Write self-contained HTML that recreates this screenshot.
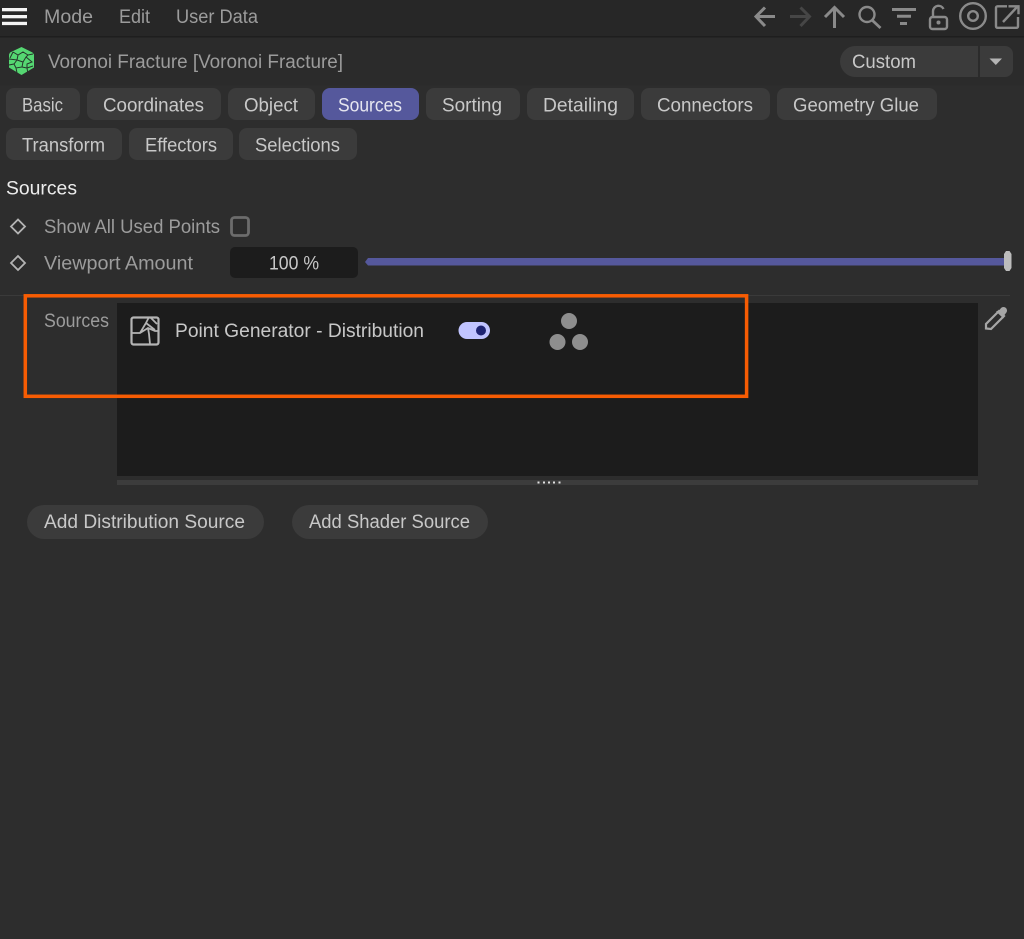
<!DOCTYPE html>
<html><head><meta charset="utf-8"><title>Voronoi Fracture</title>
<style>
html,body{margin:0;padding:0;background:#2d2d2d;width:1024px;height:939px;overflow:hidden}
svg{display:block}
text{font-family:"Liberation Sans",sans-serif;font-size:19px;fill:#b4b4b4}
.d{fill:#9c9c9c}
.b{fill:#c8c8c8}
</style></head><body>
<svg width="1024" height="939" viewBox="0 0 1024 939" xmlns="http://www.w3.org/2000/svg">
<rect width="1024" height="939" fill="#2d2d2d"/>
<rect width="1024" height="36" fill="#272727"/>
<rect y="36" width="1024" height="1.5" fill="#1e1e1e"/>
<rect y="37.5" width="1024" height="48" fill="#2b2b2b"/>
<!-- hamburger -->
<rect x="2" y="8" width="25" height="3.300" fill="#f4f4f4"/>
<rect x="2" y="15" width="25" height="3.300" fill="#f4f4f4"/>
<rect x="2" y="21.800" width="25" height="3.300" fill="#f4f4f4"/>
<text x="44" y="23" class="d" textLength="49" lengthAdjust="spacingAndGlyphs">Mode</text>
<text x="119" y="23" class="d" textLength="31" lengthAdjust="spacingAndGlyphs">Edit</text>
<text x="176" y="23" class="d" textLength="82" lengthAdjust="spacingAndGlyphs">User Data</text>
<!-- toolbar icons -->
<g fill="none" stroke="#8a8a8a" stroke-width="3">
<path d="M775 16.500H756M765 7.500l-9 9 9 9.500"/>
<path d="M790 16.500h19M800.500 7.500l9 9-9 9.500" stroke="#464646"/>
<path d="M834.500 28V8.500M825 17l9.500-9.500 9.500 9.500"/>
<circle cx="867" cy="14.500" r="7.500" stroke-width="2.400"/>
<path d="M872.500 20.500l8 7.500" stroke-width="2.800"/>
<path d="M892 9.500h24M897 16.300h14M900 23.500h7" stroke-width="3"/>
<rect x="930" y="17" width="17" height="12" rx="2.500" stroke-width="2.400"/>
<path d="M933 17v-6a5.500 5.500 0 0 1 10.500-2" stroke-width="2.400"/>
<circle cx="973" cy="16" r="12.800" stroke-width="2.400"/>
<circle cx="973" cy="16" r="4.800" stroke-width="2.400"/>
<path d="M1007 6.300h-9.500a1.500 1.500 0 0 0-1.500 1.500v18.500a1.500 1.500 0 0 0 1.500 1.500h19a1.500 1.500 0 0 0 1.500-1.500V17" stroke-width="2.400"/>
<path d="M1003 22l15-16M1008.500 6.300h10v8" stroke-width="2.400"/>
</g>
<circle cx="938.500" cy="22.500" r="2" fill="#8a8a8a"/>
<!-- voronoi icon -->
<path d="M21.500 47l11 5.500 1.500 2v13l-12.500 7.500-12.500-7.500v-13l1-2z" fill="#55d772"/>
<g fill="none" stroke="#25352a" stroke-width="1">
<path d="M13 52l5 3 5-3 5 3 5-1M18 55l-1 5-8-1M17 60l6 2 3-5 2-2M23 62l-1 5-6 1-2-4-5 1M17 60l-3 4M22 67l5 1 1 6M26 57l6 5-5 2 0 4M16 68l1 5M27 68l6-2M13 52l-3 6"/>
</g>
<text x="48" y="68" class="d" textLength="295" lengthAdjust="spacingAndGlyphs">Voronoi Fracture [Voronoi Fracture]</text>
<!-- custom dropdown -->
<path d="M855.500 46H978v31H855.500a15.500 15.500 0 0 1 0-31z" fill="#3b3b3b"/>
<path d="M980 46h25a8 8 0 0 1 8 8v15a8 8 0 0 1-8 8h-25z" fill="#3b3b3b"/>
<text x="852" y="68" class="b" textLength="64" lengthAdjust="spacingAndGlyphs">Custom</text>
<path d="M989.500 58.500h12.500l-6.200 6.500z" fill="#b4b4b4"/>
<!-- tabs -->
<g fill="#3b3b3b">
<rect x="6" y="88" width="74" height="32" rx="8"/>
<rect x="87" y="88" width="134" height="32" rx="8"/>
<rect x="228" y="88" width="87" height="32" rx="8"/>
<rect x="322" y="88" width="97" height="32" rx="8" fill="#55589c"/>
<rect x="426" y="88" width="94" height="32" rx="8"/>
<rect x="527" y="88" width="107" height="32" rx="8"/>
<rect x="641" y="88" width="129" height="32" rx="8"/>
<rect x="777" y="88" width="160" height="32" rx="8"/>
<rect x="6" y="128" width="116" height="32" rx="8"/>
<rect x="129" y="128" width="104" height="32" rx="8"/>
<rect x="239" y="128" width="118" height="32" rx="8"/>
</g>
<text x="22" y="111.500" class="b" textLength="41" lengthAdjust="spacingAndGlyphs">Basic</text>
<text x="103" y="111.500" class="b" textLength="101" lengthAdjust="spacingAndGlyphs">Coordinates</text>
<text x="244" y="111.500" class="b" textLength="54" lengthAdjust="spacingAndGlyphs">Object</text>
<text x="338" y="111.500" style="fill:#e6e6f0" textLength="64" lengthAdjust="spacingAndGlyphs">Sources</text>
<text x="442" y="111.500" class="b" textLength="60" lengthAdjust="spacingAndGlyphs">Sorting</text>
<text x="543" y="111.500" class="b" textLength="75" lengthAdjust="spacingAndGlyphs">Detailing</text>
<text x="657" y="111.500" class="b" textLength="96" lengthAdjust="spacingAndGlyphs">Connectors</text>
<text x="793" y="111.500" class="b" textLength="126" lengthAdjust="spacingAndGlyphs">Geometry Glue</text>
<text x="22" y="151.500" class="b" textLength="83" lengthAdjust="spacingAndGlyphs">Transform</text>
<text x="145" y="151.500" class="b" textLength="72" lengthAdjust="spacingAndGlyphs">Effectors</text>
<text x="255" y="151.500" class="b" textLength="85" lengthAdjust="spacingAndGlyphs">Selections</text>
<!-- section -->
<text x="6" y="194.500" style="fill:#ececec" textLength="71" lengthAdjust="spacingAndGlyphs">Sources</text>
<g fill="none" stroke="#b4b4b4" stroke-width="1.800">
<path d="M18 219.500l7 7-7 7-7-7z"/>
<path d="M18 256l7 7-7 7-7-7z"/>
</g>
<text x="44" y="233" class="d" textLength="176" lengthAdjust="spacingAndGlyphs">Show All Used Points</text>
<rect x="231.500" y="217.500" width="17" height="18" rx="3" fill="none" stroke="#6c6c6c" stroke-width="2.800"/>
<text x="44" y="269.500" class="d" textLength="149" lengthAdjust="spacingAndGlyphs">Viewport Amount</text>
<rect x="230" y="247" width="128" height="31" rx="5" fill="#1c1c1c"/>
<text x="269" y="269.500" class="b" textLength="50" lengthAdjust="spacingAndGlyphs">100 %</text>
<path d="M368 258H1006V265.500H368L365 262z" fill="#55589c"/>
<path d="M1004 254l2-3h3.500l2 3v14l-2 3H1006l-2-3z" fill="#bcbcbc"/>
<rect x="0" y="295" width="1010" height="1" fill="#3a3a3a"/>
<!-- list -->
<rect x="117" y="303" width="861" height="173" fill="#1c1c1c"/>
<rect x="117" y="480" width="861" height="5" fill="#3c3c3c"/>
<g fill="#e0e0e0">
<rect x="537.500" y="481.500" width="2" height="2"/>
<rect x="543" y="481.500" width="2" height="2"/>
<rect x="548" y="481.500" width="2" height="2"/>
<rect x="553" y="481.500" width="2" height="2"/>
<rect x="558.500" y="481.500" width="2" height="2"/>
</g>
<text x="44" y="327" class="d" textLength="65" lengthAdjust="spacingAndGlyphs">Sources</text>
<!-- point generator icon -->
<rect x="131.500" y="317.500" width="27" height="27" rx="2" fill="none" stroke="#b4b4b4" stroke-width="2.200"/>
<g fill="none" stroke="#b4b4b4" stroke-width="1.800">
<path d="M132 333h8l8-5 7 3 3 0M140 333l6-10 3-6M146 323l9 7M148 328l1 6 1 10M151 318l6 6"/>
</g>
<text x="175" y="337" class="b" textLength="249" lengthAdjust="spacingAndGlyphs">Point Generator - Distribution</text>
<rect x="458.500" y="322" width="31.500" height="17" rx="8.500" fill="#c1c4ff"/>
<circle cx="481" cy="330.500" r="5" fill="#1f2473"/>
<g fill="#8e8e8e">
<circle cx="569" cy="321" r="8"/>
<circle cx="557.500" cy="342" r="8"/>
<circle cx="580" cy="342" r="8"/>
</g>
<!-- eyedropper -->
<path d="M986 328.500v-4.500l13-13 5 5-13 13z" fill="none" stroke="#a6a6a6" stroke-width="2.200"/>
<path d="M996 311.500l3.500-1.500 1.500-2a3.500 3.500 0 0 1 5 5l-1.500 2-1 3.500z" fill="#a6a6a6"/>
<!-- orange annotation -->
<rect x="25.300" y="295.800" width="721.300" height="100.500" fill="none" stroke="#f75c03" stroke-width="3.500"/>
<!-- buttons -->
<rect x="27" y="505" width="237" height="34" rx="17" fill="#3b3b3b"/>
<rect x="292" y="505" width="196" height="34" rx="17" fill="#3b3b3b"/>
<text x="44" y="528" class="b" textLength="201" lengthAdjust="spacingAndGlyphs">Add Distribution Source</text>
<text x="309" y="528" class="b" textLength="161" lengthAdjust="spacingAndGlyphs">Add Shader Source</text>
</svg>
</body></html>
